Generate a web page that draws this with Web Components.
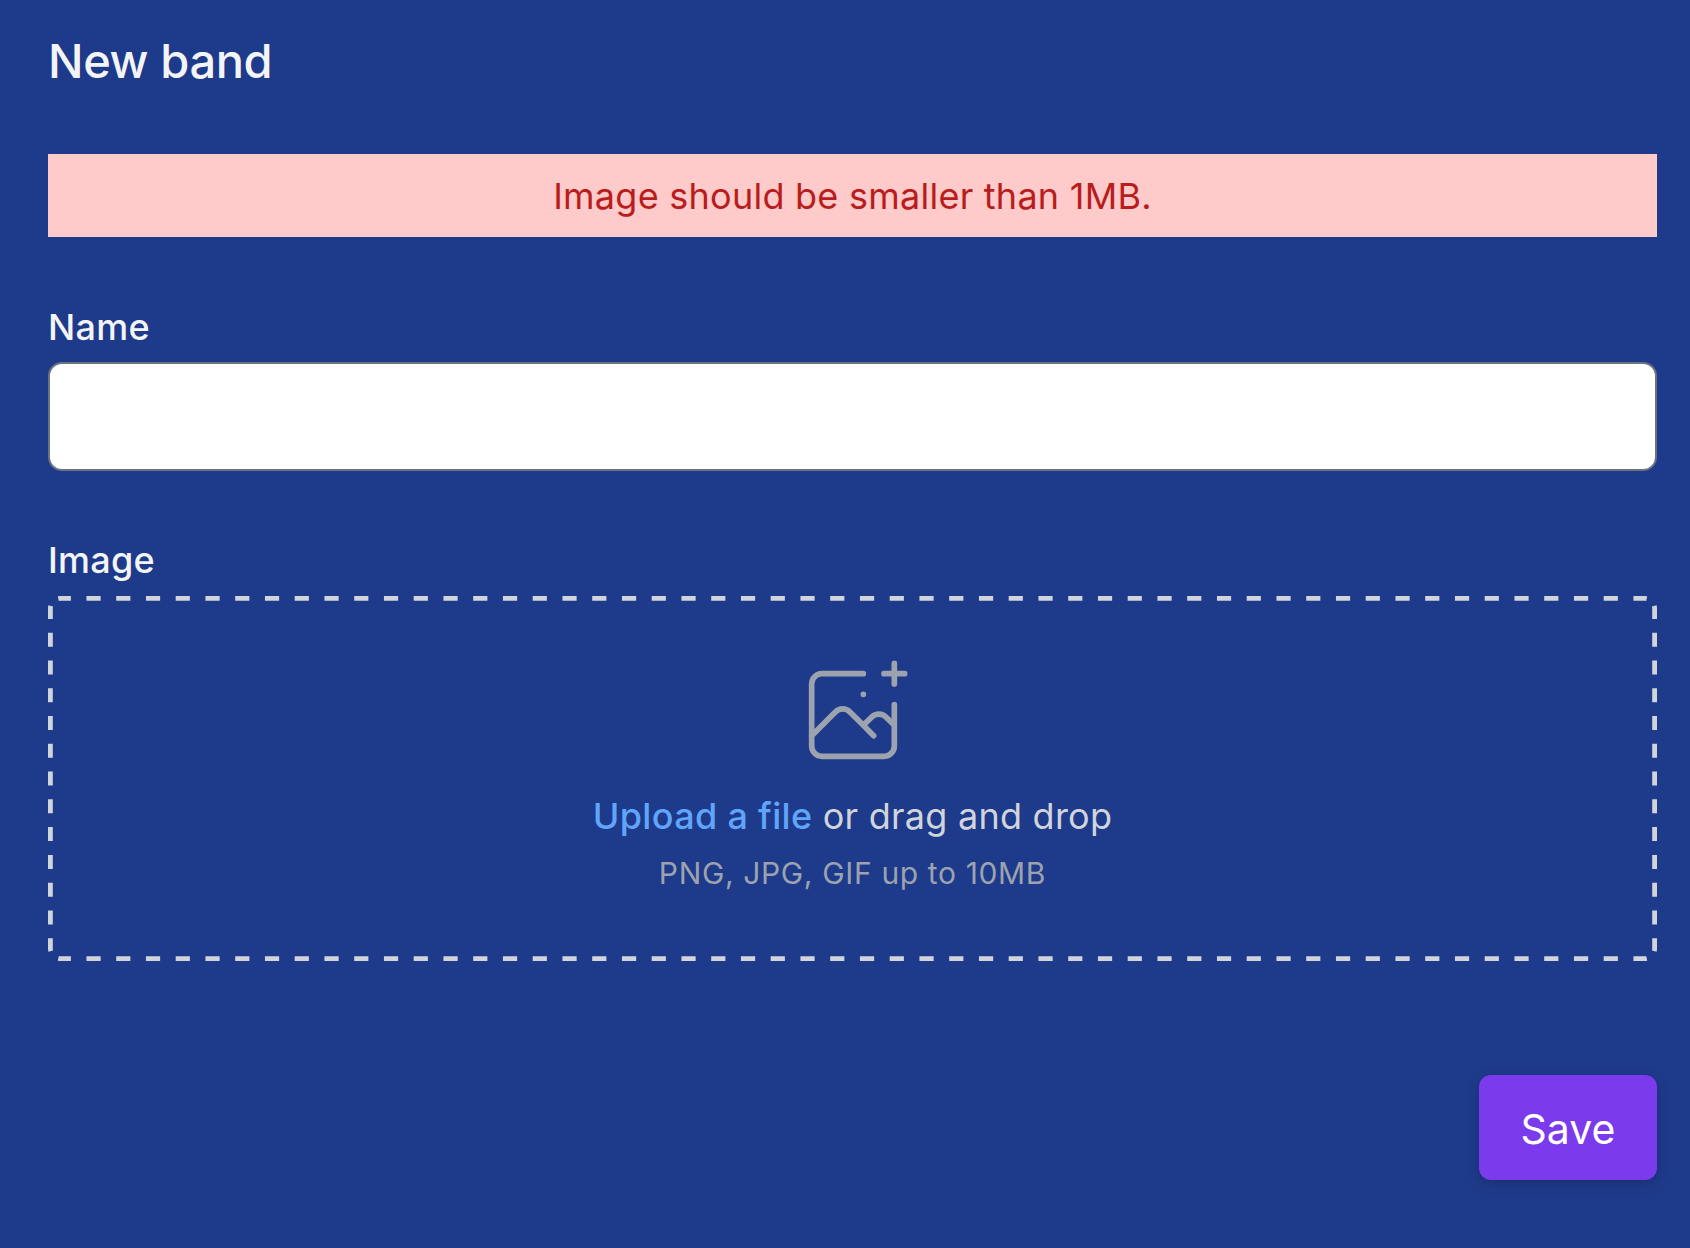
<!DOCTYPE html>
<html lang="en">
<head>
<meta charset="utf-8">
<title>New band</title>
<style>
  html, body { margin: 0; height: 100%; background: #1e3a8a; }
  body { font-family: Inter, "Liberation Sans", sans-serif; }
</style>
</head>
<body>
<band-form>
  <span slot="title">New band</span>
  <error-banner>Image should be smaller than 1MB.</error-banner>
  <text-field label="Name"></text-field>
  <image-drop label="Image"></image-drop>
  <save-button>Save</save-button>
</band-form>

<script>
class BandForm extends HTMLElement {
  constructor() {
    super();
    this.attachShadow({mode: "open"});
    this.shadowRoot.innerHTML = `
      <style>
        :host {
          display: flex;
          flex-direction: column;
          box-sizing: border-box;
          height: 1248px;
          padding: 24px 33px 0 48px;
        }
        h1 {
          margin: 0 0 56px;
          font-size: 47px;
          line-height: 74px;
          letter-spacing: -0.4px;
          font-weight: 500;
          color: #f3f4f6;
        }
      </style>
      <h1><slot name="title"></slot></h1>
      <slot></slot>
    `;
  }
}

class ErrorBanner extends HTMLElement {
  constructor() {
    super();
    this.attachShadow({mode: "open"});
    this.shadowRoot.innerHTML = `
      <style>
        :host {
          display: flex;
          align-items: center;
          justify-content: center;
          box-sizing: border-box;
          height: 83px;
          padding-top: 1px;
          margin-bottom: 66px;
          background: #fecaca;
          color: #b91c1c;
          font-size: 36px;
          font-weight: 430;
          letter-spacing: 0.25px;
        }
      </style>
      <slot></slot>
    `;
  }
}

class TextField extends HTMLElement {
  constructor() {
    super();
    this.attachShadow({mode: "open"});
    this.shadowRoot.innerHTML = `
      <style>
        :host {
          display: block;
          margin-bottom: 65px;
        }
        label {
          display: block;
          font-size: 36px;
          line-height: 48px;
          letter-spacing: 0.25px;
          font-weight: 500;
          color: #f3f4f6;
          margin-bottom: 11px;
        }
        input {
          display: block;
          box-sizing: border-box;
          width: 100%;
          height: 109px;
          border: 2px solid #6b7280;
          border-radius: 14px;
          background: #fff;
          outline: none;
        }
      </style>
      <label for="f"></label>
      <input id="f" type="text">
    `;
    this.shadowRoot.querySelector("label").textContent = this.getAttribute("label");
  }
}

class ImageDrop extends HTMLElement {
  constructor() {
    super();
    this.attachShadow({mode: "open"});
    this.shadowRoot.innerHTML = `
      <style>
        :host {
          display: block;
        }
        .label {
          font-size: 36px;
          line-height: 48px;
          letter-spacing: 0.25px;
          font-weight: 500;
          color: #f3f4f6;
          margin-bottom: 12px;
        }
        .zone {
          position: relative;
          display: flex;
          flex-direction: column;
          align-items: center;
          height: 365px;
          box-sizing: border-box;
          padding-top: 57px;
        }
        /* each side is dashed on its own, the long and short sides have different gaps */
        .edge {
          position: absolute;
          inset: 0;
          width: 100%;
          height: 100%;
          fill: none;
          stroke: #d1d5db;
          stroke-width: 4.8;
        }
        .h { stroke-dasharray: 14.2 15.55; stroke-dashoffset: 1.6; }
        .v { stroke-dasharray: 14 13.78; stroke-dashoffset: 1; }
        .icon {
          display: block;
          width: 124px;
          height: 124px;
          flex: none;
        }
        .line {
          margin-top: 15px;
          font-size: 36px;
          line-height: 48px;
          letter-spacing: 0.24px;
          font-weight: 430;
          color: #d1d5db;
        }
        .line a {
          color: #60a5fa;
          font-weight: 500;
          letter-spacing: 0.32px;
          text-decoration: none;
        }
        .hint {
          margin-top: 13px;
          font-size: 30px;
          line-height: 40px;
          letter-spacing: 0.64px;
          font-weight: 420;
          color: #9ca3af;
        }
      </style>
      <div class="label"></div>
      <div class="zone">
        <svg class="edge" viewBox="0 0 1609 365" aria-hidden="true">
          <path class="h" d="M10.3 2.62A10 10 0 0 1 12.4 2.4H1596.6A10 10 0 0 1 1598.7 2.62"></path>
          <path class="h" d="M10.3 362.38A10 10 0 0 0 12.4 362.6H1596.6A10 10 0 0 0 1598.7 362.38"></path>
          <path class="v" d="M2.72 9.9A10 10 0 0 0 2.4 12.4V352.6A10 10 0 0 0 2.72 355.1"></path>
          <path class="v" d="M1606.28 9.9A10 10 0 0 1 1606.6 12.4V352.6A10 10 0 0 1 1606.28 355.1"></path>
        </svg>
        <svg class="icon" viewBox="0 0 48 48" fill="none" stroke="#9ca3af" stroke-width="2.2" stroke-linecap="round" stroke-linejoin="round">
          <path d="M28 8H12a4 4 0 0 0-4 4v20m32-12v8m0 0v8a4 4 0 0 1-4 4H12a4 4 0 0 1-4-4v-4m32-4-3.172-3.172a4 4 0 0 0-5.656 0L28 28M8 32l9.172-9.172a4 4 0 0 1 5.656 0L28 28m0 0 4 4m4-24h8m-4-4v8m-12 4h.02"></path>
        </svg>
        <div class="line"><a href="#">Upload a file</a> or drag and drop</div>
        <div class="hint">PNG, JPG, GIF up to 10MB</div>
      </div>
    `;
    this.shadowRoot.querySelector(".label").textContent = this.getAttribute("label");
  }
}

class SaveButton extends HTMLElement {
  constructor() {
    super();
    this.attachShadow({mode: "open"});
    this.shadowRoot.innerHTML = `
      <style>
        :host {
          display: flex;
          justify-content: flex-end;
          margin-top: 114px;
        }
        button {
          width: 178px;
          height: 105px;
          padding: 2px 0 0;
          border: 0;
          border-radius: 12px;
          background: #7c3aed;
          color: #fff;
          font: 430 41px Inter, "Liberation Sans", sans-serif;
          box-shadow: 0 4px 14px rgba(0, 0, 0, 0.12), 0 2px 4px rgba(0, 0, 0, 0.08);
        }
      </style>
      <button type="button"><slot></slot></button>
    `;
  }
}

customElements.define("band-form", BandForm);
customElements.define("error-banner", ErrorBanner);
customElements.define("text-field", TextField);
customElements.define("image-drop", ImageDrop);
customElements.define("save-button", SaveButton);
</script>
</body>
</html>
